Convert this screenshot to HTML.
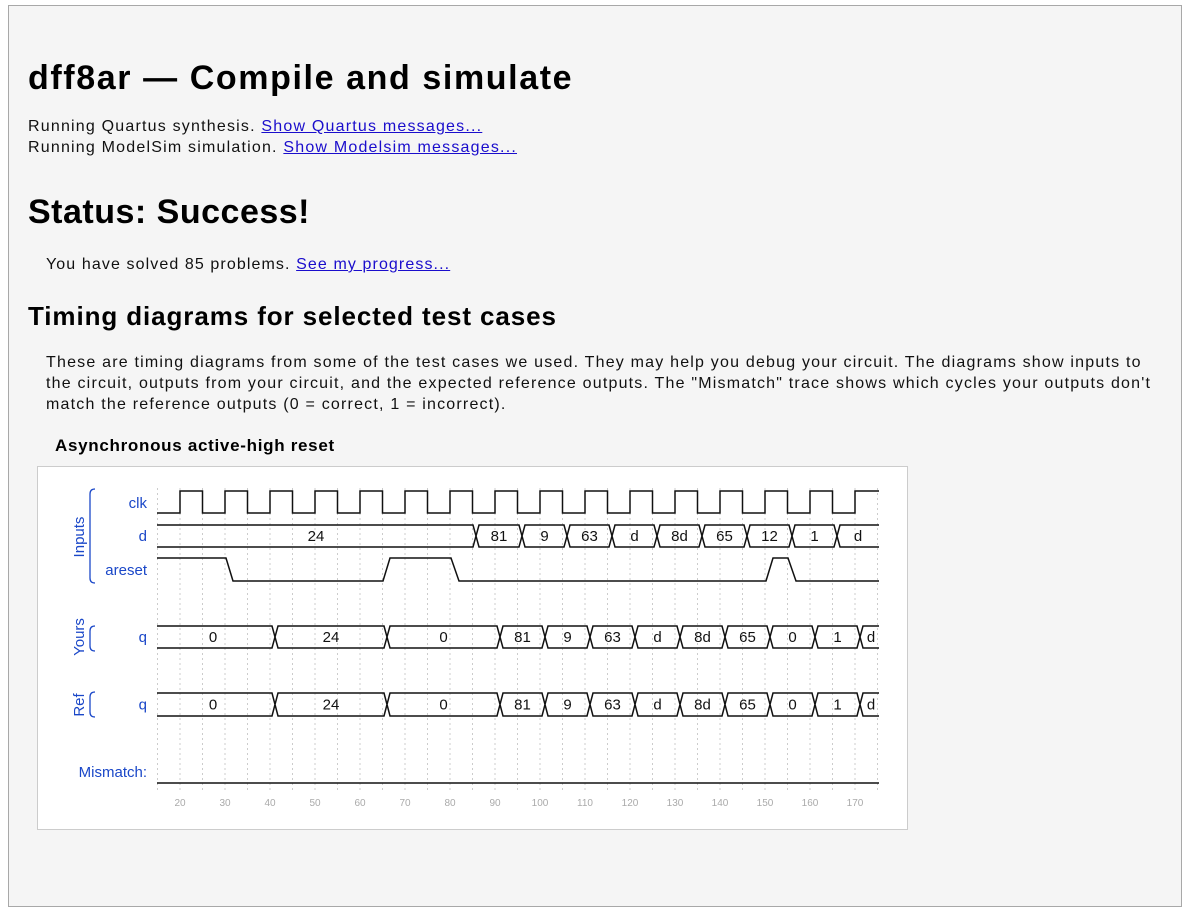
<!DOCTYPE html>
<html><head><meta charset="utf-8"><style>
html,body{margin:0;padding:0;width:1189px;height:858px;overflow:hidden;background:#fff;}
#panel{position:absolute;left:8px;top:5px;width:1172px;height:900px;border:1px solid #a8a8a8;background:#f5f5f5;}
.t{position:absolute;white-space:nowrap;font-family:"Liberation Sans",sans-serif;color:#111;}
.b{font-weight:bold;color:#000;}
a{color:#1a0dcc;text-decoration:underline;}
.p{font-size:16px;line-height:21px;letter-spacing:1.2px;}
</style></head><body>
<div id="panel"></div>
<div class="t b" style="left:28px;top:56px;font-size:34px;line-height:44px;letter-spacing:1.6px;">dff8ar — Compile and simulate</div>
<div class="t p" style="left:28px;top:116px;">Running Quartus synthesis. <a>Show Quartus messages...</a><br>Running ModelSim simulation. <a>Show Modelsim messages...</a></div>
<div class="t b" style="left:28px;top:190px;font-size:34px;line-height:44px;letter-spacing:0.5px;">Status: Success!</div>
<div class="t p" style="left:46px;top:254px;letter-spacing:1.1px;">You have solved 85 problems. <a>See my progress...</a></div>
<div class="t b" style="left:28px;top:299px;font-size:26px;line-height:34px;letter-spacing:0.9px;">Timing diagrams for selected test cases</div>
<div class="t p" style="left:46px;top:352px;letter-spacing:1.2px;">These are timing diagrams from some of the test cases we used. They may help you debug your circuit. The diagrams show inputs to<br>the circuit, outputs from your circuit, and the expected reference outputs. The "Mismatch" trace shows which cycles your outputs don't<br>match the reference outputs (0 = correct, 1 = incorrect).</div>
<div class="t b" style="left:55px;top:435px;font-size:17px;line-height:22px;letter-spacing:0.7px;">Asynchronous active-high reset</div>
<svg style="position:absolute;left:0;top:0" width="1189" height="858" viewBox="0 0 1189 858" font-family="Liberation Sans, sans-serif">
<rect x="37.5" y="466.5" width="870" height="363" fill="#fff" stroke="#ccc"/>
<g stroke="#ccc" stroke-dasharray="2,3" stroke-width="1">
<path d="M157.5,488V792M180,488V792M202.5,488V792M225,488V792M247.5,488V792M270,488V792M292.5,488V792M315,488V792M337.5,488V792M360,488V792M382.5,488V792M405,488V792M427.5,488V792M450,488V792M472.5,488V792M495,488V792M517.5,488V792M540,488V792M562.5,488V792M585,488V792M607.5,488V792M630,488V792M652.5,488V792M675,488V792M697.5,488V792M720,488V792M742.5,488V792M765,488V792M787.5,488V792M810,488V792M832.5,488V792M855,488V792M877.5,488V792"/>
</g>
<g fill="none" stroke="#111" stroke-width="1.5">
<path d="M157,513H180V491H202.5V513H225V491H247.5V513H270V491H292.5V513H315V491H337.5V513H360V491H382.5V513H405V491H427.5V513H450V491H472.5V513H495V491H517.5V513H540V491H562.5V513H585V491H607.5V513H630V491H652.5V513H675V491H697.5V513H720V491H742.5V513H765V491H787.5V513H810V491H832.5V513H855V491H879"/>
<path d="M157,558H226L233,581H383L390,558H451L459,581H766L773,558H788L796,581H879"/>
<path d="M157,525H473L476,536L473,547H157M479,525H519L522,536L519,547H479L476,536ZM525,525H564L567,536L564,547H525L522,536ZM570,525H609L612,536L609,547H570L567,536ZM615,525H654L657,536L654,547H615L612,536ZM660,525H699L702,536L699,547H660L657,536ZM705,525H744L747,536L744,547H705L702,536ZM750,525H789L792,536L789,547H750L747,536ZM795,525H834L837,536L834,547H795L792,536ZM879,525H840L837,536L840,547H879"/>
<path d="M157,626H272L275,637L272,648H157M278,626H384L387,637L384,648H278L275,637ZM390,626H497L500,637L497,648H390L387,637ZM503,626H542L545,637L542,648H503L500,637ZM548,626H587L590,637L587,648H548L545,637ZM593,626H632L635,637L632,648H593L590,637ZM638,626H677L680,637L677,648H638L635,637ZM683,626H722L725,637L722,648H683L680,637ZM728,626H767L770,637L767,648H728L725,637ZM773,626H812L815,637L812,648H773L770,637ZM818,626H857L860,637L857,648H818L815,637ZM879,626H863L860,637L863,648H879"/>
<path d="M157,693H272L275,704.5L272,716H157M278,693H384L387,704.5L384,716H278L275,704.5ZM390,693H497L500,704.5L497,716H390L387,704.5ZM503,693H542L545,704.5L542,716H503L500,704.5ZM548,693H587L590,704.5L587,716H548L545,704.5ZM593,693H632L635,704.5L632,716H593L590,704.5ZM638,693H677L680,704.5L677,716H638L635,704.5ZM683,693H722L725,704.5L722,716H683L680,704.5ZM728,693H767L770,704.5L767,716H728L725,704.5ZM773,693H812L815,704.5L812,716H773L770,704.5ZM818,693H857L860,704.5L857,716H818L815,704.5ZM879,693H863L860,704.5L863,716H879"/>
<path d="M157,783H879"/>
</g>
<g font-size="15" fill="#111" text-anchor="middle">
<text x="316" y="541">24</text><text x="499" y="541">81</text><text x="544.5" y="541">9</text><text x="589.5" y="541">63</text><text x="634.5" y="541">d</text><text x="679.5" y="541">8d</text><text x="724.5" y="541">65</text><text x="769.5" y="541">12</text><text x="814.5" y="541">1</text><text x="858" y="541">d</text>
<text x="213" y="642">0</text><text x="331" y="642">24</text><text x="443.5" y="642">0</text><text x="522.5" y="642">81</text><text x="567.5" y="642">9</text><text x="612.5" y="642">63</text><text x="657.5" y="642">d</text><text x="702.5" y="642">8d</text><text x="747.5" y="642">65</text><text x="792.5" y="642">0</text><text x="837.5" y="642">1</text><text x="871" y="642">d</text>
<text x="213" y="709.5">0</text><text x="331" y="709.5">24</text><text x="443.5" y="709.5">0</text><text x="522.5" y="709.5">81</text><text x="567.5" y="709.5">9</text><text x="612.5" y="709.5">63</text><text x="657.5" y="709.5">d</text><text x="702.5" y="709.5">8d</text><text x="747.5" y="709.5">65</text><text x="792.5" y="709.5">0</text><text x="837.5" y="709.5">1</text><text x="871" y="709.5">d</text>
</g>
<g font-size="15" fill="#1a47c8" text-anchor="end">
<text x="147" y="508">clk</text><text x="147" y="541">d</text><text x="147" y="575">areset</text><text x="147" y="642">q</text><text x="147" y="709.5">q</text><text x="147" y="777">Mismatch:</text>
</g>
<g font-size="15" fill="#1a47c8" text-anchor="middle">
<text transform="translate(84,537) rotate(-90)">Inputs</text>
<text transform="translate(84,637) rotate(-90)">Yours</text>
<text transform="translate(84,705) rotate(-90)">Ref</text>
</g>
<g fill="none" stroke="#1a47c8" stroke-width="1.3">
<path d="M95,489Q90,489 90,494V578Q90,583 95,583"/>
<path d="M95,626Q90,626 90,631V646Q90,651 95,651"/>
<path d="M95,692Q90,692 90,697V712Q90,717 95,717"/>
</g>
<g font-size="10" fill="#aaa" text-anchor="middle">
<text x="180" y="806">20</text><text x="225" y="806">30</text><text x="270" y="806">40</text><text x="315" y="806">50</text><text x="360" y="806">60</text><text x="405" y="806">70</text><text x="450" y="806">80</text><text x="495" y="806">90</text><text x="540" y="806">100</text><text x="585" y="806">110</text><text x="630" y="806">120</text><text x="675" y="806">130</text><text x="720" y="806">140</text><text x="765" y="806">150</text><text x="810" y="806">160</text><text x="855" y="806">170</text>
</g>
</svg>
</body></html>
